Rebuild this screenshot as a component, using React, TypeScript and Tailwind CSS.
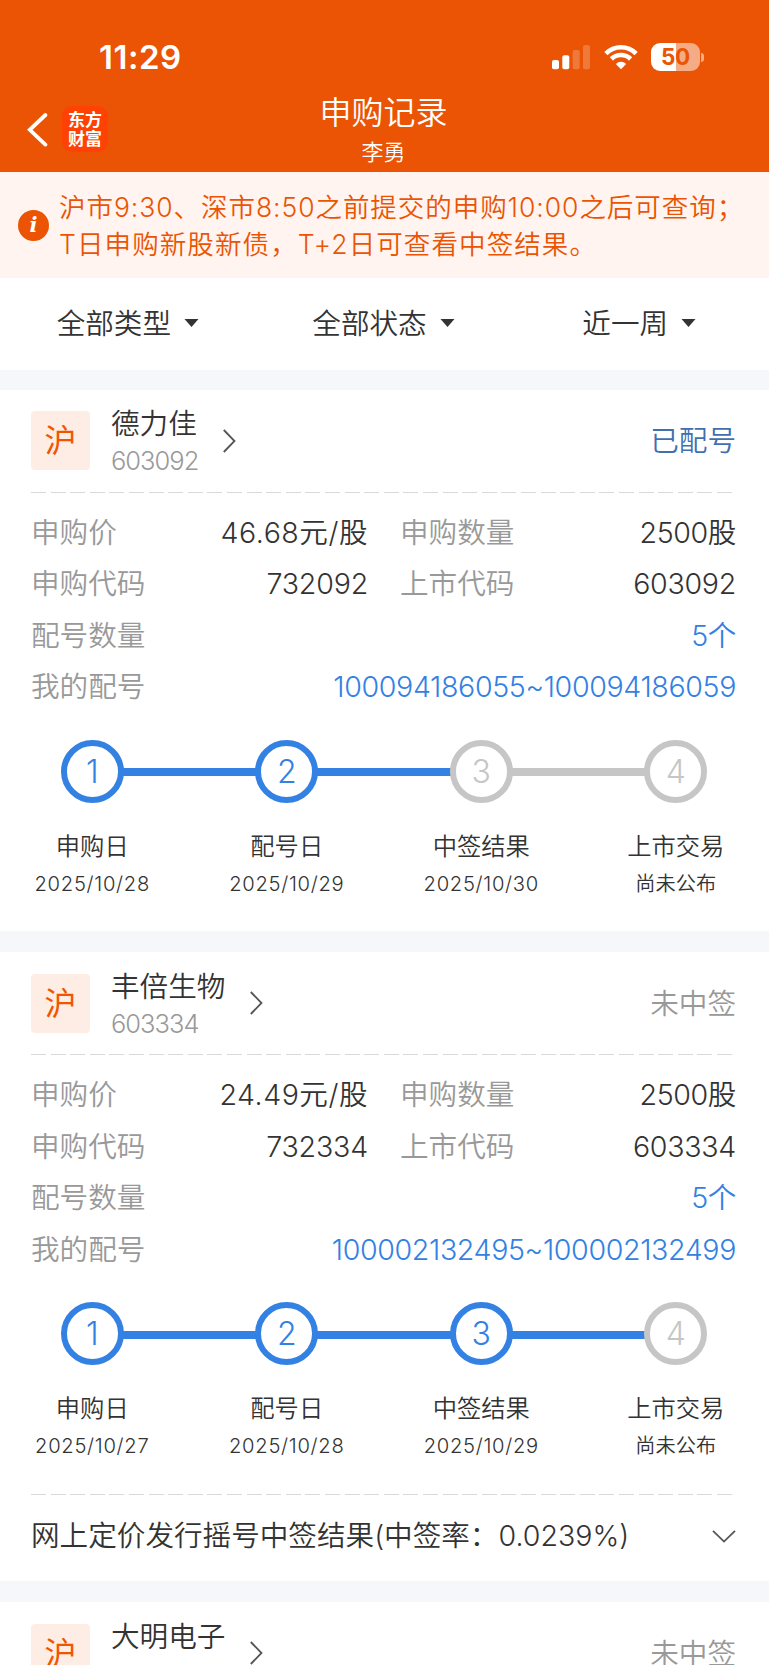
import React from "react";

type Issue = {
  name: string;
  code: string;
  status: string;
  statusClass: string;
  price: string;
  amount: string;
  applyCode: string;
  range: string;
  done: number;
  dates: string[];
  result?: string;
};

const stepNames = ["申购日", "配号日", "中签结果", "上市交易"];

const issues: Issue[] = [
  {
    name: "德力佳",
    code: "603092",
    status: "已配号",
    statusClass: "text-[#426fb0]",
    price: "46.68元/股",
    amount: "2500股",
    applyCode: "732092",
    range: "100094186055~100094186059",
    done: 2,
    dates: ["2025/10/28", "2025/10/29", "2025/10/30", "尚未公布"],
  },
  {
    name: "丰倍生物",
    code: "603334",
    status: "未中签",
    statusClass: "text-[#999999]",
    price: "24.49元/股",
    amount: "2500股",
    applyCode: "732334",
    range: "100002132495~100002132499",
    done: 3,
    dates: ["2025/10/27", "2025/10/28", "2025/10/29", "尚未公布"],
    result: "网上定价发行摇号中签结果(中签率：0.0239%)",
  },
];

function StatusBar() {
  return (
    <div className="flex h-[88px] items-start justify-between pl-[99px] pr-[65px] pt-[43px] text-white">
      <div className="text-[33px] font-semibold leading-[29px] tracking-[0.5px]">11:29</div>
      <div className="flex items-start">
        <svg width="38" height="28" viewBox="0 0 38 28" fill="currentColor">
          <rect x="0" y="17" width="7" height="9.3" rx="2" />
          <rect x="10.3" y="12.3" width="7" height="14" rx="2" />
          <rect x="20.7" y="7" width="7" height="19.3" rx="2" opacity=".22" />
          <rect x="31" y="2" width="7" height="24.3" rx="2" opacity=".22" />
        </svg>
        <svg className="ml-[14px]" width="34" height="28" viewBox="0 0 34 28">
          <g fill="none" stroke="currentColor" strokeWidth="4.6">
            <path d="M1.9 10.6 A21.3 21.3 0 0 1 32.1 10.6" />
            <path d="M7.4 16 A13.6 13.6 0 0 1 26.6 16" />
          </g>
          <path d="M11.8 20.9 A7.6 7.6 0 0 1 22.2 20.9 L17 26.3 Z" fill="currentColor" />
        </svg>
        <div className="ml-[13px] flex items-center">
          <div className="flex h-[28px] w-[49px] items-center justify-center rounded-[9px] bg-[linear-gradient(90deg,#fff_51%,#f5ac84_51%)] text-[22.5px] font-bold leading-none tracking-[-0.3px] text-[#ea5404]">
            50
          </div>
          <div className="ml-[1px] h-[9px] w-[3px] rounded-r-full bg-[#f5ac84]" />
        </div>
      </div>
    </div>
  );
}

function TitleBar() {
  return (
    <div className="grid h-[84px] grid-cols-[1fr_auto_1fr] text-white">
      <div className="flex items-start pl-[27px] pt-[18px]">
        <svg className="mt-[7px]" width="22" height="34" viewBox="0 0 22 34" fill="none" stroke="currentColor" strokeWidth="3.8">
          <path d="M18.4 2 L2.8 16.8 L18.4 31.6" strokeLinecap="round" />
        </svg>
        <div className="ml-[13px] flex size-[46px] flex-col items-center justify-center rounded-[10px] bg-[#ff4203] pt-px text-[17px] font-bold leading-[19px]">
          <span>东方</span>
          <span>财富</span>
        </div>
      </div>
      <div className="flex -translate-x-px flex-col items-center pt-[5px]">
        <div className="text-[32px] leading-[40px]">申购记录</div>
        <div className="mt-[4px] text-[22px] leading-[30px]">李勇</div>
      </div>
      <div />
    </div>
  );
}

function Notice() {
  return (
    <div className="flex h-[105.5px] items-center bg-[#fff4ef] pl-[18px] text-[#ea5404]">
      <div className="mt-px flex size-[31px] shrink-0 items-center justify-center rounded-full bg-[#ea5404] pb-px font-['DejaVu_Serif',serif] text-[21px] font-bold italic leading-none text-white">
        i
      </div>
      <div className="ml-[10px] whitespace-nowrap pt-[3px] text-[26.5px] leading-[37.3px]">
        <div className="tracking-[0.95px]">沪市9:30、深市8:50之前提交的申购10:00之后可查询；</div>
        <div className="tracking-[1.1px]">T日申购新股新债，T+2日可查看中签结果。</div>
      </div>
    </div>
  );
}

function Filter({ label }: { label: string }) {
  return (
    <div className="flex flex-1 items-center justify-center">
      <span className="pt-[2px]">{label}</span>
      <svg className="-mt-px ml-[13px]" width="15" height="8" viewBox="0 0 15 8" fill="#333">
        <path d="M0.5 0 H14.5 L7.5 8 Z" />
      </svg>
    </div>
  );
}

function Dashes() {
  return (
    <div className="h-px w-[702px] bg-[repeating-linear-gradient(90deg,#d9d9d9_0_15px,transparent_15px_19.6px)]" />
  );
}

type HeadProps = { name: string; code?: string; status: string; statusClass: string };

function CardHead({ name, code, status, statusClass }: HeadProps) {
  return (
    <div className="flex h-[59px] items-center">
      <div className="flex size-[59px] items-center justify-center rounded-[4px] bg-[#fdede5] pt-px text-[32px] font-normal leading-none text-[#f25500]">
        沪
      </div>
      <div className="ml-[21px] flex h-[59px] flex-col">
        <span className="-mt-[7px] text-[28.6px] leading-[40px] text-[#333]">{name}</span>
        {code && <span className="text-[25.5px] leading-[34px] tracking-[-1px] text-[#999]">{code}</span>}
      </div>
      <svg className="ml-[25px]" width="13" height="24" viewBox="0 0 13 24" fill="none" stroke="#555" strokeWidth="1.8">
        <path d="M0.8 1 L11.5 12 L0.8 23" />
      </svg>
      <span className={"-mr-px ml-auto pt-[2px] " + statusClass}>{status}</span>
    </div>
  );
}

function Steps({ done, dates }: { done: number; dates: string[] }) {
  return (
    <div className="-ml-[36px] flex w-[778px]">
      {stepNames.map((name, i) => {
        const active = i < done;
        return (
          <div key={name} className="flex w-[194.5px] flex-col items-center">
            <div className="flex w-full items-center">
              <div className={"mt-[2px] h-[8px] flex-1 " + (i === 0 ? "bg-transparent" : i <= done ? "bg-[#3381e3]" : "bg-[#c6c6c6]")} />
              <div
                className={
                  "-mx-px flex size-[63px] items-center justify-center rounded-full border-[6px] bg-white pt-px text-[32px] font-light leading-none " +
                  (active ? "border-[#3381e3] text-[#3381e3]" : "border-[#c6c6c6] text-[#c6c6c6]")
                }
              >
                {i + 1}
              </div>
              <div className={"mt-[2px] h-[8px] flex-1 " + (i === 3 ? "bg-transparent" : i < done ? "bg-[#3381e3]" : "bg-[#c6c6c6]")} />
            </div>
            <div className="mt-[25px] text-[24.3px] leading-[36px]">{name}</div>
            <div className={"mt-[4px] text-[20.2px] leading-[32px] " + (dates[i].includes("/") ? "tracking-[0.7px]" : "")}>{dates[i]}</div>
          </div>
        );
      })}
    </div>
  );
}

function Pair({ label, value, track }: { label: string; value: string; track: string }) {
  return (
    <div className="flex justify-between">
      <span className="text-[#999]">{label}</span>
      <span className={"-mr-px " + track}>{value}</span>
    </div>
  );
}

function Row({ label, value }: { label: string; value: string }) {
  return (
    <div className="flex justify-between">
      <span className="text-[#999]">{label}</span>
      <span className="-mr-px tracking-[-0.37px] text-[#3381e3]">{value}</span>
    </div>
  );
}

function Card({ item }: { item: Issue }) {
  return (
    <section className={"bg-white pl-[31px] pr-[34px] pt-[21.6px] text-[28.6px] text-[#333] " + (item.result ? "h-[628.7px]" : "h-[541.2px]")}>
      <CardHead name={item.name} code={item.code} status={item.status} statusClass={item.statusClass} />
      <div className="mt-[21.5px]">
        <Dashes />
      </div>
      <div className="mt-[14px] leading-[51.5px]">
        <div className="grid grid-cols-[336px_335px] gap-x-[33px]">
          <Pair label="申购价" value={item.price} track="tracking-[0.5px]" />
          <Pair label="申购数量" value={item.amount} track="tracking-[-0.4px]" />
          <Pair label="申购代码" value={item.applyCode} track="tracking-[-0.2px]" />
          <Pair label="上市代码" value={item.code} track="tracking-[-0.3px]" />
        </div>
        <Row label="配号数量" value="5个" />
        <Row label="我的配号" value={item.range} />
      </div>
      <div className="mt-[27px]">
        <Steps done={item.done} dates={item.dates} />
      </div>
      {item.result && (
        <div className="mt-[31.4px]">
          <Dashes />
          <div className="-mr-px flex h-[84px] items-center justify-between">
            <span>{item.result}</span>
            <svg width="24" height="13" viewBox="0 0 24 13" fill="none" stroke="#555" strokeWidth="1.8">
              <path d="M1 0.8 L12 11.6 L23 0.8" />
            </svg>
          </div>
        </div>
      )}
    </section>
  );
}

export default function App() {
  return (
    <div className="h-[1665px] w-[769px] overflow-hidden bg-white font-['Inter','Noto_Sans_CJK_SC',sans-serif] font-[350] text-[#333]">
      <header className="h-[172px] bg-[#ea5404]">
        <StatusBar />
        <TitleBar />
      </header>
      <Notice />
      <nav className="flex h-[92.5px] bg-white pr-[2px] text-[28.6px]">
        <Filter label="全部类型" />
        <Filter label="全部状态" />
        <Filter label="近一周" />
      </nav>
      <div className="h-[19.7px] bg-[#f6f7fa]" />
      {issues.map((item) => (
        <React.Fragment key={item.code}>
          <Card item={item} />
          <div className="h-[21.4px] bg-[#f6f7fa]" />
        </React.Fragment>
      ))}
      <section className="bg-white pl-[31px] pr-[34px] pt-[21.6px] text-[28.6px]">
        <CardHead name="大明电子" status="未中签" statusClass="text-[#999999]" />
      </section>
    </div>
  );
}
